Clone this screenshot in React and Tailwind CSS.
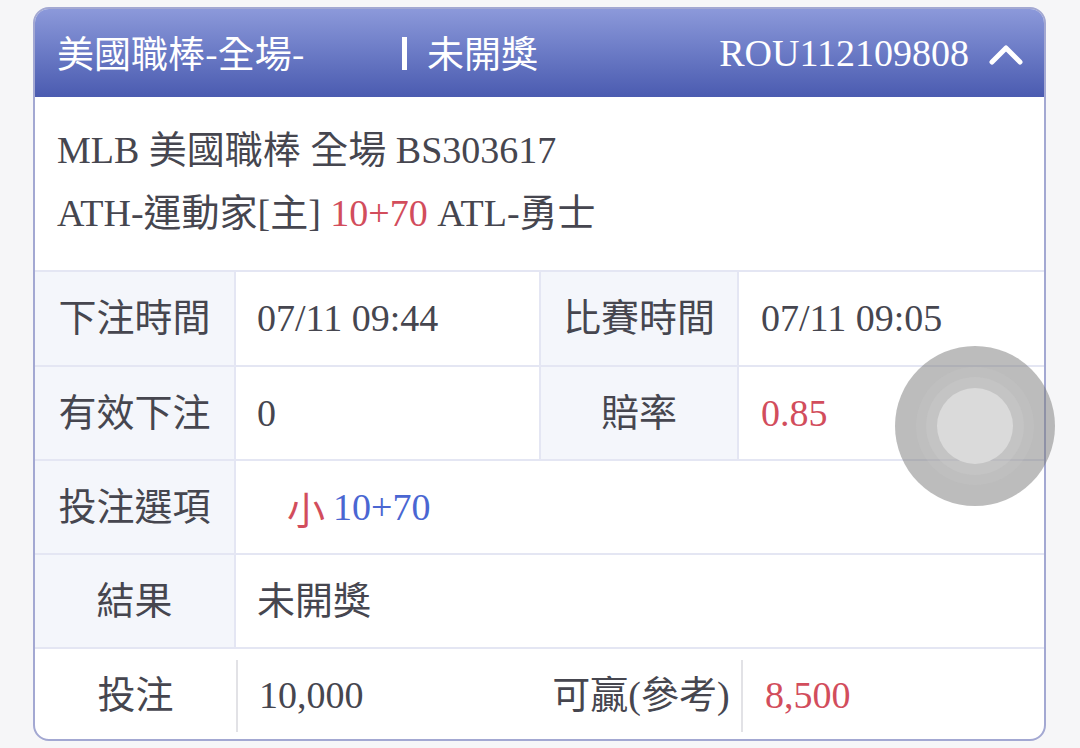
import React from "react";

const font = { fontFamily: '"Liberation Serif", "Noto Sans CJK TC", serif' };
const sans = { fontFamily: '"Noto Sans CJK TC", sans-serif' };

const Label = ({ children }) => (
  <div className="w-[201px] shrink-0 flex items-center justify-center border-r-2 border-[#e4e6f3] bg-[#f4f6fb]">
    {children}
  </div>
);

const Label2 = ({ children }) => (
  <div className="w-[200px] shrink-0 flex items-center justify-center border-x-2 border-[#e4e6f3] bg-[#f4f6fb]">
    {children}
  </div>
);

const App = () => {
  return (
    <div
      className="min-h-screen bg-[#f6f6f8] pt-[7px] pl-[33px] pr-[34px] text-[38px] text-[#46464f]"
      style={font}
    >
      <div className="relative h-[734px] rounded-[16px] border-2 border-[#a3a8d2] bg-white overflow-hidden">
        {/* header */}
        <div className="h-[88px] flex items-center pl-[22px] pr-[20px] bg-gradient-to-b from-[#8c99da] to-[#4b5bb0] text-white">
          <span className="w-[345px] text-[37px]" style={sans}>
            美國職棒-全場-
          </span>
          <span className="w-[5px] h-[33px] bg-white mr-[20px]" />
          <span className="text-[37px]" style={sans}>未開獎</span>
          <span className="ml-auto">ROU112109808</span>
          <svg width="36" height="26" viewBox="0 0 36 26" className="ml-[19px]">
            <polyline
              points="4,22 18,8 32,22"
              fill="none"
              stroke="white"
              strokeWidth="5"
              strokeLinecap="round"
              strokeLinejoin="round"
            />
          </svg>
        </div>

        {/* match info */}
        <div className="h-[173px] pl-[22px] pt-[22px] leading-[63px]">
          <div>MLB 美國職棒 全場 BS303617</div>
          <div>
            ATH-運動家[主] <span className="text-[#d24d5c]">10+70</span> ATL-勇士
          </div>
        </div>

        {/* table */}
        <div className="flex h-[95px] border-t-2 border-[#e4e6f3]">
          <Label>下注時間</Label>
          <div className="w-[303px] shrink-0 flex items-center pl-[21px]">07/11 09:44</div>
          <Label2>比賽時間</Label2>
          <div className="flex-1 flex items-center pl-[22px]">07/11 09:05</div>
        </div>
        <div className="flex h-[94px] border-t-2 border-[#e4e6f3]">
          <Label>有效下注</Label>
          <div className="w-[303px] shrink-0 flex items-center pl-[21px]">0</div>
          <Label2>賠率</Label2>
          <div className="flex-1 flex items-center pl-[22px] text-[#d24d5c]">0.85</div>
        </div>
        <div className="flex h-[94px] border-t-2 border-[#e4e6f3]">
          <Label>投注選項</Label>
          <div className="flex-1 flex items-center pl-[51px]">
            <span className="text-[#d24d5c]" style={sans}>
              小
            </span>
            <span className="ml-[8px] text-[#4a66d2]">10+70</span>
          </div>
        </div>
        <div className="flex h-[94px] border-t-2 border-[#e4e6f3]">
          <Label>結果</Label>
          <div className="flex-1 flex items-center pl-[21px]">未開獎</div>
        </div>
        <div className="flex h-[95px] border-t-2 border-[#e4e6f3] items-center">
          <div className="w-[201px] shrink-0 text-center">投注</div>
          <div className="w-[2px] h-[72px] bg-[#e2e2e6]" />
          <div className="w-[303px] shrink-0 pl-[21px]">10,000</div>
          <div className="w-[200px] shrink-0 text-center">可贏(參考)</div>
          <div className="w-[2px] h-[72px] bg-[#e2e2e6]" />
          <div className="flex-1 pl-[22px] text-[#d24d5c]">8,500</div>
        </div>
      </div>

      {/* floating assistive button */}
      <div className="absolute left-[895px] top-[346px] w-[160px] h-[160px] rounded-full bg-[#7a7a7a]/50 flex items-center justify-center">
        <div className="w-[118px] h-[118px] rounded-full bg-[#cfcfcf]/20 flex items-center justify-center">
          <div className="w-[98px] h-[98px] rounded-full bg-[#d4d4d4]/25 flex items-center justify-center">
            <div className="w-[76px] h-[76px] rounded-full bg-[#dadada]" />
          </div>
        </div>
      </div>
    </div>
  );
};

export default App;
